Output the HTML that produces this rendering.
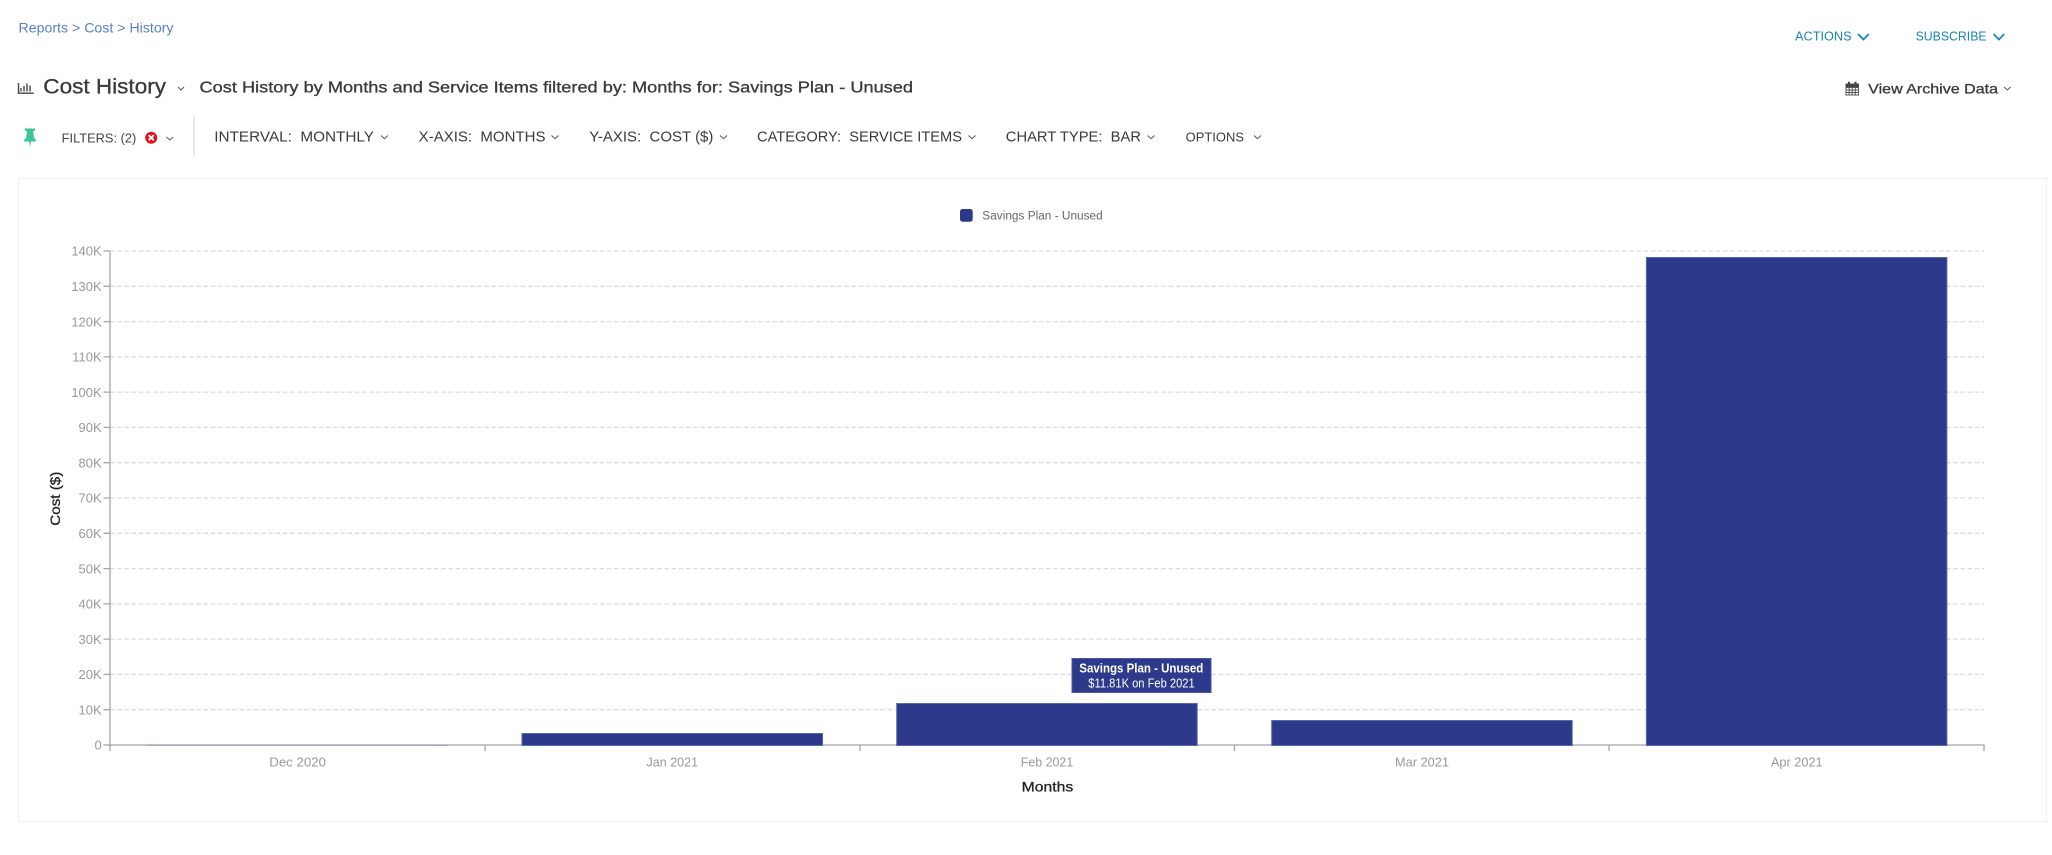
<!DOCTYPE html>
<html lang="en">
<head>
<meta charset="utf-8">
<title>Cost History</title>
<style>
html,body{margin:0;padding:0;background:#fff;width:2052px;height:855px;overflow:hidden}
svg{display:block;filter:blur(.35px)}
text{font-family:"Liberation Sans",sans-serif}
.ax{font-size:13px;fill:#999}
.f{font-size:14.5px;fill:#3a3a3a}
.grid{stroke:#dcdcdc;stroke-width:1.3;stroke-dasharray:4.6 2.6}
.chev{fill:none;stroke:#555;stroke-width:1}
.bar{fill:#2d3a8c;stroke:#5a66a8;stroke-width:1}
.m{stroke:currentColor;stroke-width:.3}
</style>
</head>
<body>
<svg width="2052" height="855" viewBox="0 0 2052 855" xmlns="http://www.w3.org/2000/svg">
<rect width="2052" height="855" fill="#fff"/>

<!-- header -->
<text x="18.5" y="32.7" font-size="14" fill="#5a7fc5" textLength="155" lengthAdjust="spacingAndGlyphs">Reports &gt; Cost &gt; History</text>
<text x="1795" y="40.7" font-size="12.5" fill="#1c84b8" textLength="56.6" lengthAdjust="spacingAndGlyphs">ACTIONS</text>
<path d="M1858 34l5.400 5.500 5.400-5.500" fill="none" stroke="#1c84b8" stroke-width="1.8"/>
<text x="1915.6" y="40.7" font-size="12.5" fill="#1c84b8" textLength="71" lengthAdjust="spacingAndGlyphs">SUBSCRIBE</text>
<path d="M1993.5 34l5.400 5.500 5.400-5.500" fill="none" stroke="#1c84b8" stroke-width="1.8"/>

<!-- title row -->
<path d="M18.5 83v10.2h15.2M21 91.5v-3.5M24 91.5v-5.5M27 91.5v-8M30 91.5v-6" fill="none" stroke="#444" stroke-width="1.4"/>
<text x="43.3" y="93.3" font-size="21" fill="#3a3a3a" class="m" style="color:#3a3a3a" textLength="122.7" lengthAdjust="spacingAndGlyphs">Cost History</text>
<path class="chev" d="M178 87l3 3 3-3"/>
<text x="199.5" y="92.7" font-size="15.5" fill="#3a3a3a" class="m" style="color:#3a3a3a" textLength="713.5" lengthAdjust="spacingAndGlyphs">Cost History by Months and Service Items filtered by: Months for: Savings Plan - Unused</text>
<g transform="translate(-3.5 0)">
<g fill="none" stroke="#555" stroke-width="1">
<rect x="1849.5" y="84" width="12.500" height="11"/>
<path d="M1849.500 87.500h12.500M1849.500 90h12.500M1849.500 92.500h12.500M1852.600 87.500v7.500M1855.700 87.500v7.500M1858.800 87.500v7.500"/>
</g>
<path d="M1849.500 84h12.500v3h-12.500z" fill="#444"/>
<rect x="1851.500" y="81.700" width="2" height="3.500" fill="#444"/><rect x="1858" y="81.700" width="2" height="3.500" fill="#444"/>
</g>
<text x="1868.2" y="93.3" font-size="14" fill="#3a3a3a" class="m" style="color:#3a3a3a" textLength="129.8" lengthAdjust="spacingAndGlyphs">View Archive Data</text>
<path class="chev" d="M2004 87l3.300 3 3.300-3"/>

<!-- filter row -->
<path d="M25 128.500h10.500v2.500h-1.800l.8 6.500 2 2.500v1.500h-5l-.9 5.500-.9-5.500h-5v-1.500l2-2.500.8-6.500h-1.800z" fill="#3fc495" transform="translate(-.5 0)"/>
<text x="61.7" y="142.3" font-size="12.5" fill="#444" textLength="74.600" lengthAdjust="spacingAndGlyphs">FILTERS: (2)</text>
<circle cx="151.200" cy="137.700" r="6" fill="#e0101c"/>
<path d="M148.700 135.200l5 5M153.700 135.200l-5 5" stroke="#fff" stroke-width="2"/>
<path class="chev" d="M166.300 137l3.500 3 3.500-3"/>
<rect x="193.300" y="116" width="1.300" height="40" fill="#ddd"/>

<text class="f" x="214.300" y="141.700" textLength="159.700" lengthAdjust="spacingAndGlyphs" xml:space="preserve">INTERVAL:  MONTHLY</text>
<path class="chev" d="M381 135.500l3.500 3.200 3.500-3.200"/>
<text class="f" x="418.700" y="141.700" textLength="126.800" lengthAdjust="spacingAndGlyphs" xml:space="preserve">X-AXIS:  MONTHS</text>
<path class="chev" d="M551.500 135.500l3.500 3.200 3.500-3.200"/>
<text class="f" x="589.300" y="141.700" textLength="124.100" lengthAdjust="spacingAndGlyphs" xml:space="preserve">Y-AXIS:  COST ($)</text>
<path class="chev" d="M720 135.500l3.500 3.200 3.500-3.200"/>
<text class="f" x="757" y="141.700" textLength="205" lengthAdjust="spacingAndGlyphs" xml:space="preserve">CATEGORY:  SERVICE ITEMS</text>
<path class="chev" d="M968.500 135.500l3.500 3.200 3.500-3.200"/>
<text class="f" x="1005.800" y="141.700" textLength="135.200" lengthAdjust="spacingAndGlyphs" xml:space="preserve">CHART TYPE:  BAR</text>
<path class="chev" d="M1147.500 135.500l3.500 3.200 3.500-3.200"/>
<text x="1185.700" y="141.700" font-size="12.500" fill="#3a3a3a" textLength="58.300" lengthAdjust="spacingAndGlyphs">OPTIONS</text>
<path class="chev" d="M1254 135.500l3.500 3.200 3.500-3.200"/>

<!-- card -->
<rect x="18.500" y="178.500" width="2028" height="643" fill="#fff" stroke="#f0f0f0" stroke-width="1"/>

<!-- legend -->
<rect x="960" y="209" width="12.700" height="12.700" rx="2.500" fill="#2d3a8c"/>
<text x="982.300" y="219.700" font-size="11.500" fill="#666" textLength="120.400" lengthAdjust="spacingAndGlyphs">Savings Plan - Unused</text>

<!-- grid -->
<g class="grid">
<path d="M110 251H1984"/><path d="M110 286.300H1984"/><path d="M110 321.600H1984"/><path d="M110 356.900H1984"/><path d="M110 392.100H1984"/>
<path d="M110 427.400H1984"/><path d="M110 462.700H1984"/><path d="M110 498H1984"/><path d="M110 533.300H1984"/><path d="M110 568.600H1984"/>
<path d="M110 603.900H1984"/><path d="M110 639.100H1984"/><path d="M110 674.400H1984"/><path d="M110 709.700H1984"/>
</g>

<!-- axes -->
<g stroke="#a5a5a5" stroke-width="1.300" fill="none">
<path d="M110 251V751"/>
<path d="M110 745H1984V751"/>
<path d="M485 745v6M860 745v6M1234.500 745v6M1609 745v6"/>
<path d="M103.500 251H110M103.500 286.300H110M103.500 321.600H110M103.500 356.900H110M103.500 392.100H110M103.500 427.400H110M103.500 462.700H110M103.500 498H110M103.500 533.300H110M103.500 568.600H110M103.500 603.900H110M103.500 639.100H110M103.500 674.400H110M103.500 709.700H110M103.500 745H110"/>
</g>

<!-- y labels -->
<g class="ax" text-anchor="end">
<text x="101.700" y="255.700">140K</text>
<text x="101.700" y="291">130K</text>
<text x="101.700" y="326.300">120K</text>
<text x="101.700" y="361.600">110K</text>
<text x="101.700" y="396.800">100K</text>
<text x="101.700" y="432.100">90K</text>
<text x="101.700" y="467.400">80K</text>
<text x="101.700" y="502.700">70K</text>
<text x="101.700" y="538">60K</text>
<text x="101.700" y="573.300">50K</text>
<text x="101.700" y="608.600">40K</text>
<text x="101.700" y="643.800">30K</text>
<text x="101.700" y="679.100">20K</text>
<text x="101.700" y="714.400">10K</text>
<text x="101.700" y="749.700">0</text>
</g>

<!-- bars -->
<rect x="147" y="744.500" width="300.500" height="1.300" fill="#9397bb"/>
<rect class="bar" x="522" y="733.500" width="300.500" height="12"/>
<rect class="bar" x="896.700" y="703.500" width="300.500" height="42"/>
<rect class="bar" x="1271.700" y="720.500" width="300.500" height="25"/>
<rect class="bar" x="1646.400" y="257.500" width="300.500" height="488"/>

<!-- x labels -->
<g class="ax" text-anchor="middle">
<text x="297.600" y="766.700" textLength="56.700" lengthAdjust="spacingAndGlyphs">Dec 2020</text>
<text x="672.300" y="766.700" textLength="51.500" lengthAdjust="spacingAndGlyphs">Jan 2021</text>
<text x="1047" y="766.700" textLength="52.500" lengthAdjust="spacingAndGlyphs">Feb 2021</text>
<text x="1422" y="766.700" textLength="54" lengthAdjust="spacingAndGlyphs">Mar 2021</text>
<text x="1796.800" y="766.700" textLength="51.700" lengthAdjust="spacingAndGlyphs">Apr 2021</text>
</g>

<!-- axis titles -->
<text x="1021.700" y="791.700" font-size="14" fill="#222" class="m" style="color:#222" textLength="51.600" lengthAdjust="spacingAndGlyphs">Months</text>
<text transform="translate(60 525.700) rotate(-90)" x="0" y="0" font-size="14" fill="#222" class="m" style="color:#222" textLength="54" lengthAdjust="spacingAndGlyphs">Cost ($)</text>

<!-- tooltip -->
<rect x="1072" y="658.500" width="139" height="34" fill="#2d3a8c" stroke="#4a56a0" stroke-width="1"/>
<text x="1079.300" y="672.700" font-size="12.500" font-weight="bold" fill="#fff" textLength="124" lengthAdjust="spacingAndGlyphs">Savings Plan - Unused</text>
<text x="1088.300" y="687.300" font-size="12.500" fill="#fff" textLength="106.400" lengthAdjust="spacingAndGlyphs">$11.81K on Feb 2021</text>
</svg>
</body>
</html>
